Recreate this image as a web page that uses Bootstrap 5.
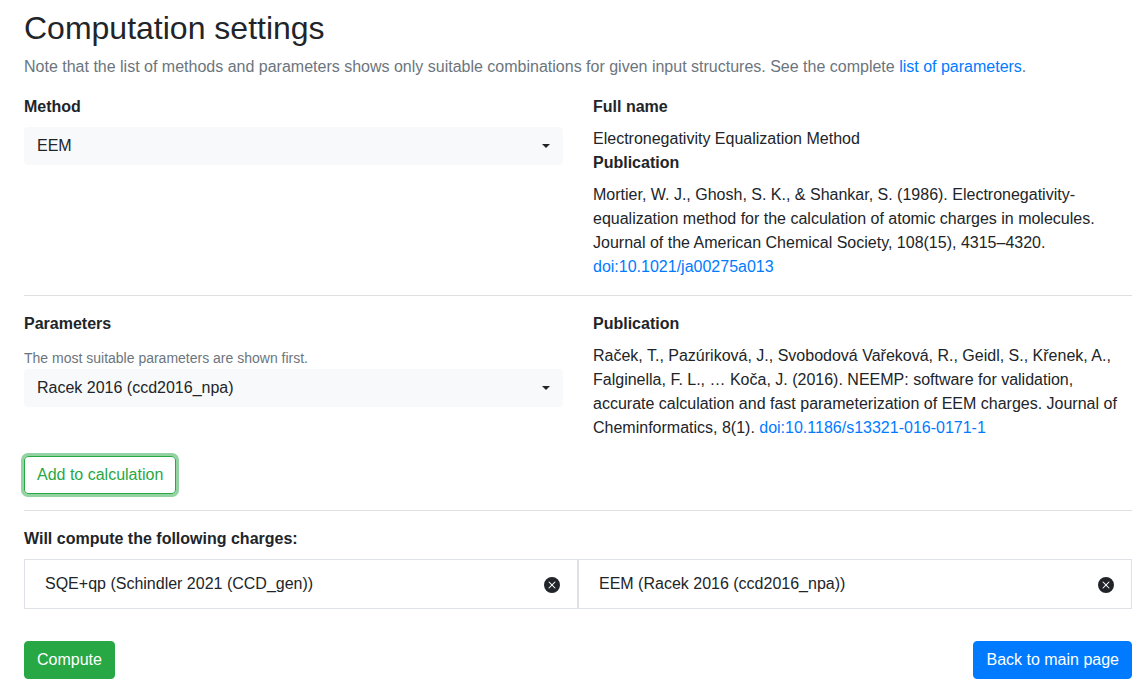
<!DOCTYPE html>
<html lang="en">
<head>
<meta charset="utf-8">
<meta name="viewport" content="width=device-width, initial-scale=1">
<title>Computation settings</title>
<link href="https://cdn.jsdelivr.net/npm/bootstrap@5.3.0/dist/css/bootstrap.min.css" rel="stylesheet">
<style>
  body { font-family: "Liberation Sans", Arial, sans-serif; color: #212529; background: #fff; }
  .settings { padding: 9px 3px 9px 24px; }
  .settings h1 { font-size: 32px; line-height: 38px; font-weight: 400; }
  .fields { --bs-gutter-x: 30px; }
  .muted { color: #6c757d; }
  a { color: #007bff; text-decoration: none; }
  a:hover { text-decoration: underline; }
  hr { border-color: #dfdfdf; opacity: 1; }
  .hint { font-size: 14px; line-height: 21px; padding-top: 4px; }
  .heading { display: block; font-weight: 700; margin-bottom: 8px; }
  .picker {
    border: 1px solid #f8f9fa; border-radius: 4px; color: #212529; height: 38px;
    background-color: #f8f9fa;
    background-image: url("data:image/svg+xml,%3csvg xmlns='http://www.w3.org/2000/svg' viewBox='0 0 8 4'%3e%3cpath fill='%23212529' d='M0 0h8L4 4z'/%3e%3c/svg%3e");
    background-size: 8px 4px;
  }
  .btn { --bs-btn-border-radius: 4px; }
  .btn-add { --bs-btn-color: #28a745; --bs-btn-border-color: #28a745; --bs-btn-hover-bg: #28a745; --bs-btn-hover-color: #fff; box-shadow: 0 0 0 3px rgba(40, 167, 69, .5); }
  .btn-compute { --bs-btn-color: #fff; --bs-btn-bg: #28a745; --bs-btn-border-color: #28a745; --bs-btn-hover-bg: #218838; --bs-btn-hover-color: #fff; }
  .btn-back { --bs-btn-color: #fff; --bs-btn-bg: #007bff; --bs-btn-border-color: #007bff; --bs-btn-hover-bg: #0069d9; --bs-btn-hover-color: #fff; }
  .charge { border: 1px solid #dee2e6; padding: 12px 10px 12px 20px; }
  .remove { border: 0; background: none; padding: 2px 7px 0; color: #212529; }
  .remove svg { display: block; }
</style>
</head>
<body>
<main class="settings">
  <h1 class="mb-2">Computation settings</h1>
  <p class="muted mb-3">Note that the list of methods and parameters shows only suitable combinations for given input structures. See the complete <a href="#">list of parameters</a>.</p>

  <form>
    <div class="row fields">
      <div class="col-6">
        <label class="heading" for="method">Method</label>
        <select class="form-select picker" id="method"><option>EEM</option></select>
      </div>
      <div class="col-6">
        <div class="heading">Full name</div>
        <div>Electronegativity Equalization Method</div>
        <div class="heading">Publication</div>
        <div>Mortier, W. J., Ghosh, S. K., &amp; Shankar, S. (1986). Electronegativity-equalization method for the calculation of atomic charges in molecules. Journal of the American Chemical Society, 108(15), 4315–4320. <a href="#">doi:10.1021/ja00275a013</a></div>
      </div>
    </div>

    <hr class="my-3">

    <div class="row fields">
      <div class="col-6">
        <label class="heading" for="parameters">Parameters</label>
        <div class="hint muted">The most suitable parameters are shown first.</div>
        <select class="form-select picker" id="parameters"><option>Racek 2016 (ccd2016_npa)</option></select>
      </div>
      <div class="col-6">
        <div class="heading">Publication</div>
        <div>Raček, T., Pazúriková, J., Svobodová Vařeková, R., Geidl, S., Křenek, A., Falginella, F. L., … Koča, J. (2016). NEEMP: software for validation, accurate calculation and fast parameterization of EEM charges. Journal of Cheminformatics, 8(1). <a href="#">doi:10.1186/s13321-016-0171-1</a></div>
      </div>
    </div>

    <button type="button" class="btn btn-add mt-3">Add to calculation</button>

    <hr class="my-3">

    <div class="heading">Will compute the following charges:</div>
    <div class="row g-0">
      <div class="col-6 charge d-flex justify-content-between align-items-center">
        <span>SQE+qp (Schindler 2021 (CCD_gen))</span>
        <button type="button" class="remove" aria-label="Remove SQE+qp"><svg width="16" height="16" viewBox="0 0 16 16" fill="currentColor"><path d="M16 8A8 8 0 1 1 0 8a8 8 0 0 1 16 0zM5.354 4.646a.5.5 0 1 0-.708.708L7.293 8l-2.647 2.646a.5.5 0 0 0 .708.708L8 8.707l2.646 2.647a.5.5 0 0 0 .708-.708L8.707 8l2.647-2.646a.5.5 0 0 0-.708-.708L8 7.293 5.354 4.646z"/></svg></button>
      </div>
      <div class="col-6 charge d-flex justify-content-between align-items-center">
        <span>EEM (Racek 2016 (ccd2016_npa))</span>
        <button type="button" class="remove" aria-label="Remove EEM"><svg width="16" height="16" viewBox="0 0 16 16" fill="currentColor"><path d="M16 8A8 8 0 1 1 0 8a8 8 0 0 1 16 0zM5.354 4.646a.5.5 0 1 0-.708.708L7.293 8l-2.647 2.646a.5.5 0 0 0 .708.708L8 8.707l2.646 2.647a.5.5 0 0 0 .708-.708L8.707 8l2.647-2.646a.5.5 0 0 0-.708-.708L8 7.293 5.354 4.646z"/></svg></button>
      </div>
    </div>

    <div class="d-flex justify-content-between pt-3 mt-3">
      <button type="submit" class="btn btn-compute">Compute</button>
      <button type="button" class="btn btn-back">Back to main page</button>
    </div>
  </form>
</main>
<script src="https://cdn.jsdelivr.net/npm/bootstrap@5.3.0/dist/js/bootstrap.bundle.min.js"></script>
</body>
</html>
